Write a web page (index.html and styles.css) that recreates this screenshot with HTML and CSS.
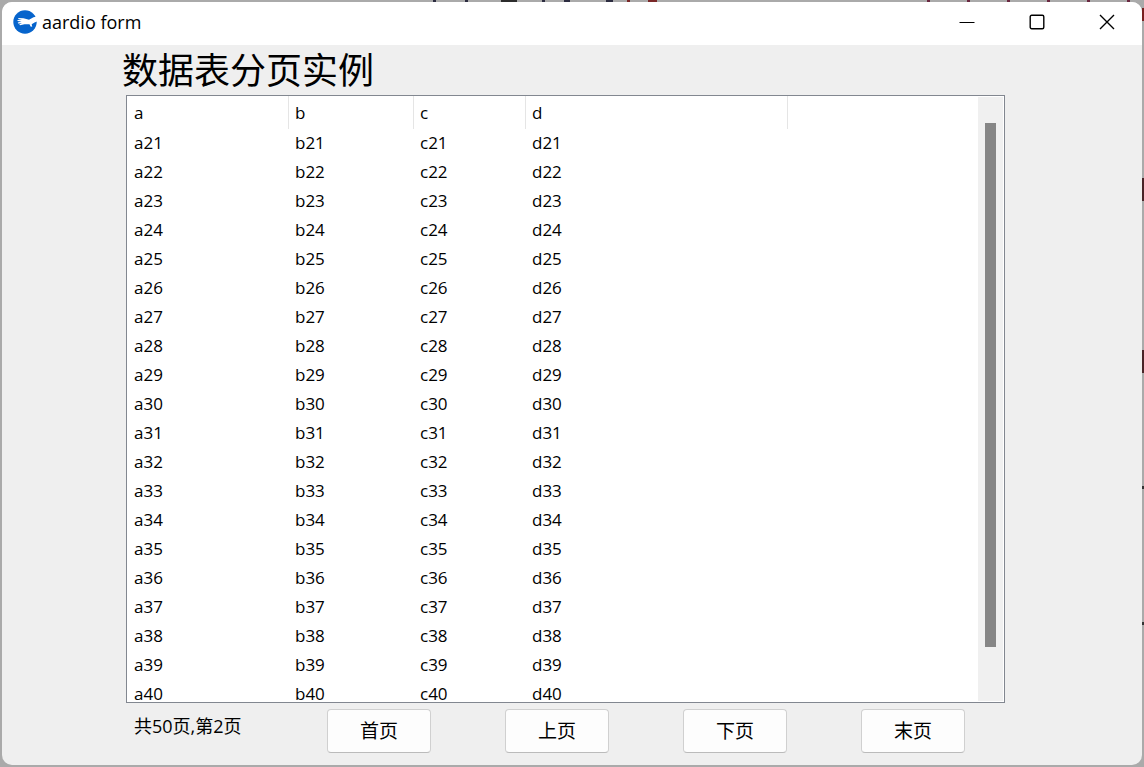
FILE: index.html
```html
<!DOCTYPE html>
<html lang="zh-CN">
<head>
<meta charset="utf-8">
<title>aardio form</title>
<link rel="stylesheet" href="styles.css">
</head>
<body>
<div class="window">
  <header class="titlebar">
    <svg class="logo" viewBox="0 0 24 24" aria-hidden="true">
      <circle cx="12" cy="12" r="11.7" fill="#0664cc"/>
      <path d="M24 6.500 L20.500 7.300 L16 9.800 L10.500 8.300 L5.300 7.900 L5.300 8.900 L9 9.800 L4.500 10 L4.500 11 L8.500 11.400 L4.800 12.500 L5 13.500 L9 13.200 L6.200 14.500 L7 15.200 L11.500 14.200 L16.500 14.200 L17.500 16.600 L19.200 16.800 L18.700 14.300 L21.500 12.600 L24 11.500 Z" fill="#fff"/>
    </svg>
    <span class="caption">aardio form</span>
    <div class="controls">
      <button class="control" aria-label="Minimize"><svg viewBox="0 0 16 16"><path d="M0.500 8.500H15.500"/></svg></button>
      <button class="control" aria-label="Maximize"><svg viewBox="0 0 16 16"><rect x="1.200" y="1.200" width="13.600" height="13.600" rx="1.500"/></svg></button>
      <button class="control" aria-label="Close"><svg viewBox="0 0 16 16"><path d="M1 1L15 15M15 1L1 15"/></svg></button>
    </div>
  </header>
  <main class="form">
    <h1 class="heading">数据表分页实例</h1>
    <div class="list">
      <div class="viewport">
        <table class="grid">
          <colgroup><col class="col-a"><col class="col-b"><col class="col-c"><col class="col-d"><col></colgroup>
          <thead><tr><th>a</th><th>b</th><th>c</th><th>d</th><td></td></tr></thead>
          <tbody>
            <tr><td>a21</td><td>b21</td><td>c21</td><td>d21</td><td></td></tr>
            <tr><td>a22</td><td>b22</td><td>c22</td><td>d22</td><td></td></tr>
            <tr><td>a23</td><td>b23</td><td>c23</td><td>d23</td><td></td></tr>
            <tr><td>a24</td><td>b24</td><td>c24</td><td>d24</td><td></td></tr>
            <tr><td>a25</td><td>b25</td><td>c25</td><td>d25</td><td></td></tr>
            <tr><td>a26</td><td>b26</td><td>c26</td><td>d26</td><td></td></tr>
            <tr><td>a27</td><td>b27</td><td>c27</td><td>d27</td><td></td></tr>
            <tr><td>a28</td><td>b28</td><td>c28</td><td>d28</td><td></td></tr>
            <tr><td>a29</td><td>b29</td><td>c29</td><td>d29</td><td></td></tr>
            <tr><td>a30</td><td>b30</td><td>c30</td><td>d30</td><td></td></tr>
            <tr><td>a31</td><td>b31</td><td>c31</td><td>d31</td><td></td></tr>
            <tr><td>a32</td><td>b32</td><td>c32</td><td>d32</td><td></td></tr>
            <tr><td>a33</td><td>b33</td><td>c33</td><td>d33</td><td></td></tr>
            <tr><td>a34</td><td>b34</td><td>c34</td><td>d34</td><td></td></tr>
            <tr><td>a35</td><td>b35</td><td>c35</td><td>d35</td><td></td></tr>
            <tr><td>a36</td><td>b36</td><td>c36</td><td>d36</td><td></td></tr>
            <tr><td>a37</td><td>b37</td><td>c37</td><td>d37</td><td></td></tr>
            <tr><td>a38</td><td>b38</td><td>c38</td><td>d38</td><td></td></tr>
            <tr><td>a39</td><td>b39</td><td>c39</td><td>d39</td><td></td></tr>
            <tr><td>a40</td><td>b40</td><td>c40</td><td>d40</td><td></td></tr>
          </tbody>
        </table>
      </div>
      <div class="track"><div class="thumb"></div></div>
    </div>
    <nav class="pager" aria-label="分页">
      <span class="status">共50页,第2页</span>
      <button class="page-button">首页</button>
      <button class="page-button">上页</button>
      <button class="page-button">下页</button>
      <button class="page-button">末页</button>
    </nav>
  </main>
</div>
</body>
</html>
```
FILE: styles.css
```css
* { box-sizing: border-box; }

body {
  margin: 0;
  height: 100vh;
  padding: 2px;
  background:
    linear-gradient(#4a2428, #4a2428) right 178px / 2px 23px no-repeat,
    linear-gradient(#4a2428, #4a2428) right 350px / 2px 23px no-repeat,
    linear-gradient(#7a2020, #7a2020) right 8px / 2px 13px no-repeat,
    linear-gradient(#333, #333) right 486px / 2px 3px no-repeat,
    linear-gradient(#333, #333) right 622px / 2px 3px no-repeat,
    linear-gradient(#2c2c2c, #2c2c2c) 501px 0 / 16px 2px no-repeat,
    linear-gradient(#2c2c40, #2c2c40) 433px 0 / 3px 2px no-repeat,
    linear-gradient(#2c2c40, #2c2c40) 465px 0 / 3px 2px no-repeat,
    linear-gradient(#2c2c40, #2c2c40) 542px 0 / 3px 2px no-repeat,
    linear-gradient(#2c2c40, #2c2c40) 564px 0 / 6px 2px no-repeat,
    linear-gradient(#2c2c40, #2c2c40) 606px 0 / 7px 2px no-repeat,
    linear-gradient(#7a2828, #7a2828) 627px 0 / 3px 2px no-repeat,
    linear-gradient(#7a2828, #7a2828) 648px 0 / 9px 2px no-repeat,
    repeating-linear-gradient(90deg, #6a2840 0 3px, transparent 3px 40px) 927px 0 / 217px 2px no-repeat,
    #aaa;
  color: #000;
  font-family: "Open Sans", "Noto Sans CJK SC", sans-serif;
  font-size: 17px;
}

button {
  font: inherit;
  color: inherit;
}

.window {
  height: 100%;
  display: flex;
  flex-direction: column;
  overflow: hidden;
  border-radius: 10px;
  background: #efefef;
}

.titlebar {
  flex: none;
  height: 43px;
  display: flex;
  align-items: center;
  padding: 0 0 3px 11px;
  background: #fff;
}

.logo {
  width: 24px;
  height: 24px;
  margin-right: 5px;
}

.caption {
  font-size: 18px;
}

.controls {
  display: flex;
  align-self: stretch;
  margin-left: auto;
}

.control {
  width: 70px;
  display: grid;
  place-items: center;
  padding: 0;
  border: 0;
  background: none;
}

.control svg {
  width: 16px;
  height: 16px;
  fill: none;
  stroke: #000;
  stroke-width: 1.4;
}

.control path[d*="H"] {
  stroke-width: 1;
}

.form {
  flex: 1;
  min-height: 0;
  display: flex;
  flex-direction: column;
  padding: 2px 137px 12px 124px;
}

.heading {
  margin: 0 0 0 -4px;
  font-size: 36px;
  font-weight: 400;
  line-height: 48px;
}

.list {
  flex: 1;
  min-height: 0;
  display: flex;
  border: 1px solid #828790;
  background: #fff;
}

.viewport {
  flex: 1;
  overflow: hidden;
}

.grid {
  width: 100%;
  table-layout: fixed;
  border-collapse: separate;
  border-spacing: 0;
}

.col-a { width: 162px; }
.col-b { width: 125px; }
.col-c { width: 112px; }
.col-d { width: 262px; }

.grid th,
.grid td {
  height: 29px;
  padding: 0 0 1px 6px;
  font-weight: 400;
  line-height: 26px;
  text-align: left;
}

.grid th:first-child,
.grid td:first-child {
  padding-left: 7px;
}

.grid th {
  height: 33px;
  padding-bottom: 0;
  border-right: 1px solid #e5e5e5;
}

.track {
  width: 25px;
  display: flex;
  justify-content: center;
  margin: 1px;
  padding: 26px 0 54px;
  background: #f0f0f0;
}

.thumb {
  width: 11px;
  background: #868686;
}

.pager {
  flex: none;
  display: flex;
  gap: 74px;
  margin-top: 6px;
  padding-left: 8px;
  font-size: 19px;
}

.status {
  width: 119px;
  font-size: 18px;
  line-height: 34px;
  white-space: nowrap;
}

.page-button {
  width: 104px;
  height: 44px;
  padding: 0 0 2px;
  border: 1px solid #d0d0d0;
  border-bottom-color: #bbb;
  border-radius: 4px;
  background: #fdfdfd;
}
```
